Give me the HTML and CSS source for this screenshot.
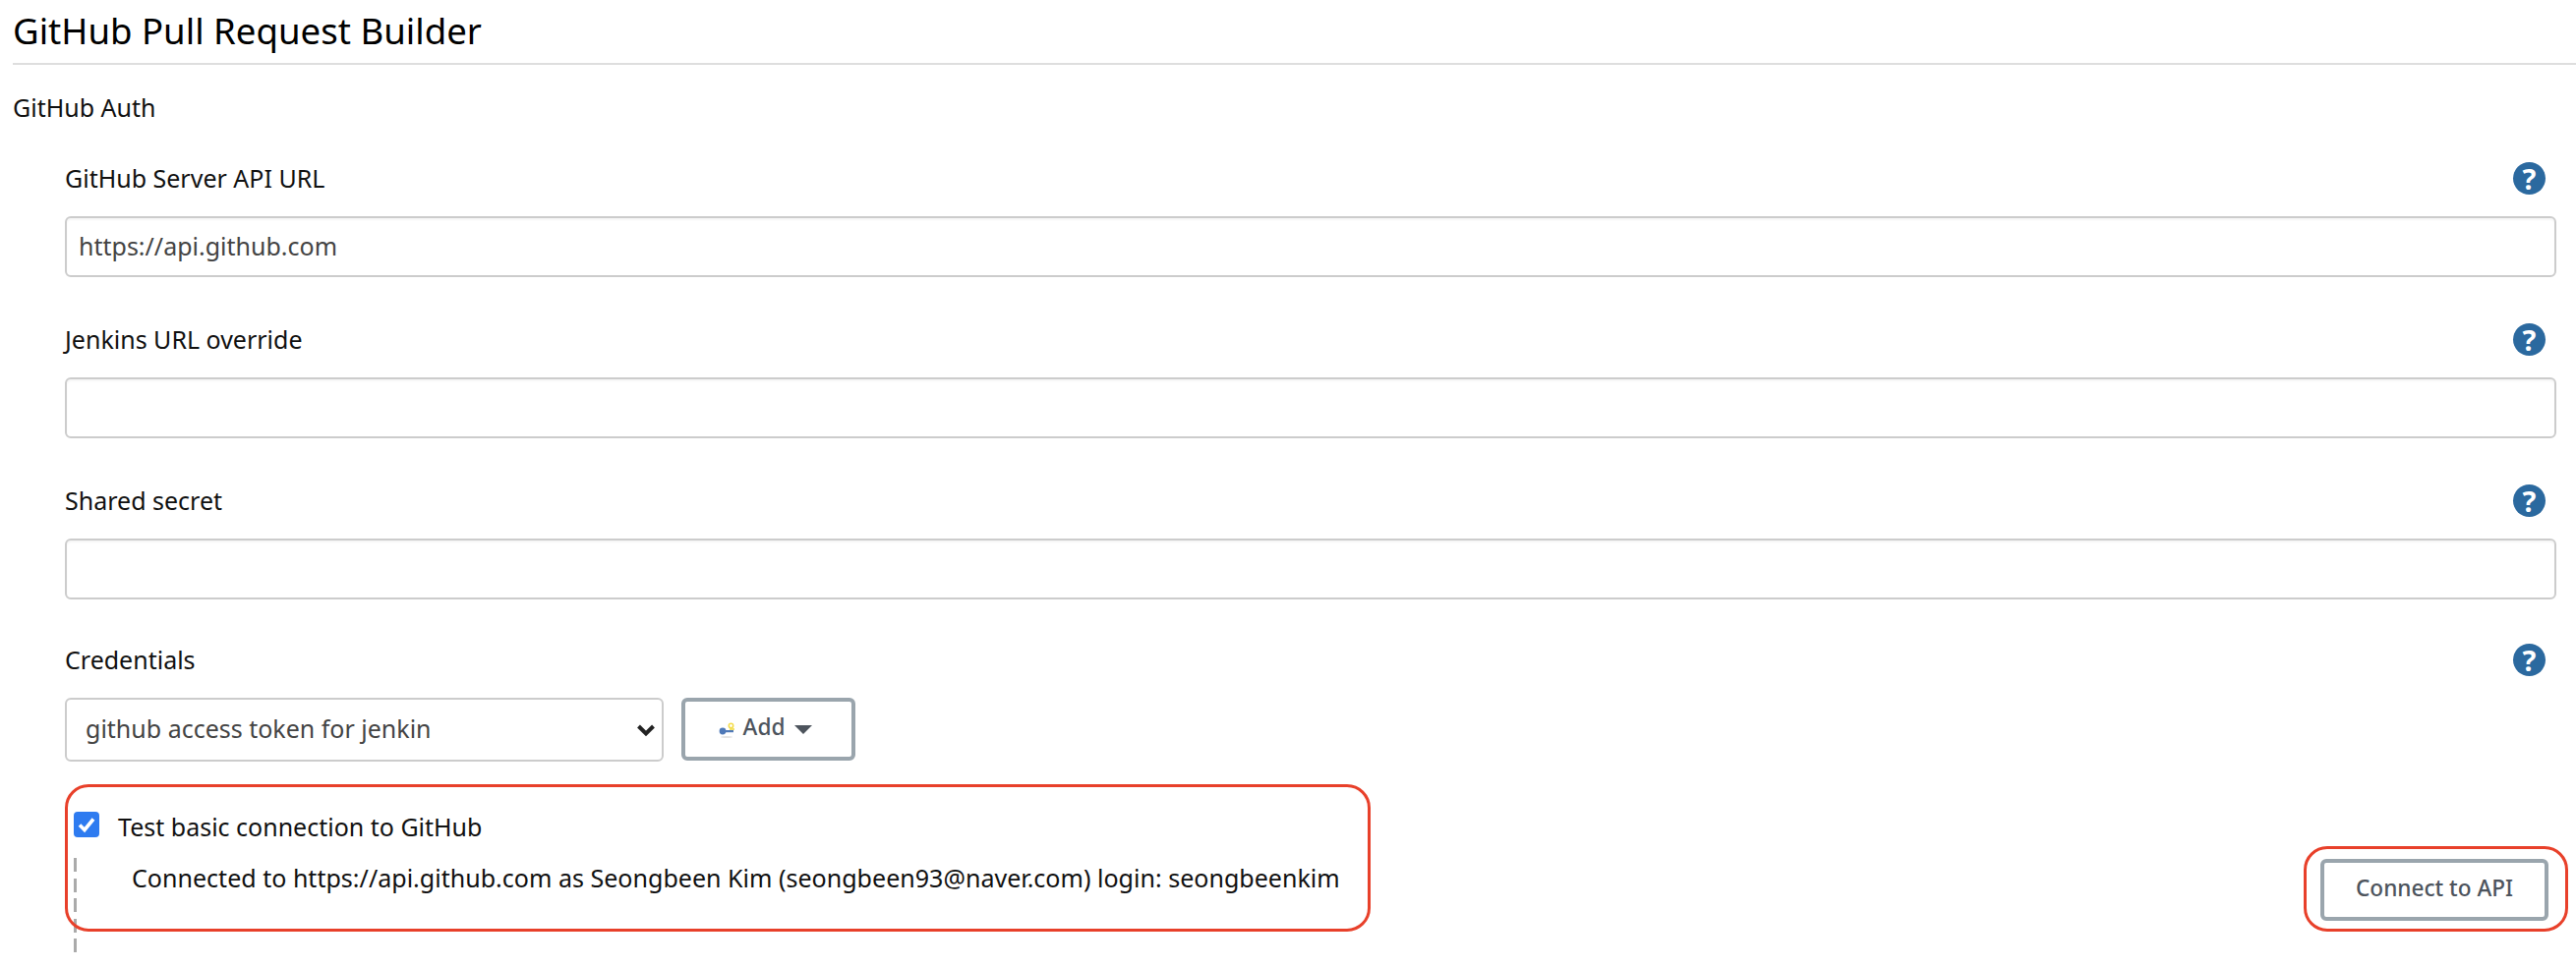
FILE: index.html
```html
<!DOCTYPE html>
<html lang="en">
<head>
<meta charset="utf-8">
<title>GitHub Pull Request Builder</title>
<link rel="stylesheet" href="styles.css">
</head>
<body>
<div class="page">
  <h1 class="title">GitHub Pull Request Builder</h1>
  <div class="section">GitHub Auth</div>
  <div class="fields">
    <div class="field">
      <div class="label-row"><label class="label">GitHub Server API URL</label><span class="help">?</span></div>
      <input class="input" type="text" value="https://api.github.com">
    </div>
    <div class="field">
      <div class="label-row"><label class="label">Jenkins URL override</label><span class="help">?</span></div>
      <input class="input" type="text" value="">
    </div>
    <div class="field">
      <div class="label-row"><label class="label">Shared secret</label><span class="help">?</span></div>
      <input class="input" type="text" value="">
    </div>
    <div class="field">
      <div class="label-row cred-label"><label class="label">Credentials</label><span class="help">?</span></div>
      <div class="cred-row">
        <div class="select">
          <span class="select-text">github access token for jenkin</span>
          <svg class="chev" width="20" height="14" viewBox="0 0 20 14"><path d="M2.5 3 L10 10.5 L17.5 3" fill="none" stroke="#222" stroke-width="4"/></svg>
        </div>
        <button class="btn add" type="button">
          <svg class="key" width="16" height="16" viewBox="0 0 16 16"><ellipse cx="8" cy="15" rx="6" ry="1" fill="#e4e4e4"/><circle cx="4" cy="9" r="3.4" fill="#4f79b8"/><rect x="6" y="8" width="9" height="2.2" fill="#4f79b8"/><rect x="11" y="6" width="5" height="2" fill="#f2e36a"/><circle cx="12.5" cy="3.5" r="2.2" fill="none" stroke="#f4dc4c" stroke-width="1.6"/></svg>
          <span class="add-text">Add</span>
          <svg class="caret" width="18" height="9" viewBox="0 0 18 9"><path d="M0 0 H18 L9 9 Z" fill="#4d545d"/></svg>
        </button>
      </div>
    </div>
    <div class="test">
      <div class="check-row">
        <span class="check"><svg width="26" height="26" viewBox="0 0 26 26"><path d="M6 13.5 L11 18.5 L20 7.5" fill="none" stroke="#fff" stroke-width="3.6"/></svg></span>
        <span class="check-label">Test basic connection to GitHub</span>
      </div>
      <div class="result-row">
        <div class="result">Connected to https://api.github.com as Seongbeen Kim (seongbeen93@naver.com) login: seongbeenkim</div>
        <button class="btn connect" type="button">Connect to API</button>
      </div>
      <span class="dash"></span>
      <span class="mark mark-a"></span>
      <span class="mark mark-b"></span>
    </div>
  </div>
</div>
</body>
</html>
```
FILE: styles.css
```css
html, body { margin: 0; padding: 0; background: #fff; }
body { font-family: "Noto Sans", "Noto Sans CJK KR", sans-serif; color: #111; height: 984px; overflow: hidden; }
.page { padding: 0 0 0 13px; }
.title { margin: 0; height: 64px; line-height: 62px; font-size: 36.6px; font-weight: 400; color: #000; border-bottom: 2px solid #dedede; width: 2607px; }
.section { margin-top: 23px; font-size: 25px; line-height: 40px; height: 40px; }
.fields { margin-left: 53px; width: 2534px; margin-top: 34px; }
.field { height: 164px; }
.label-row { display: flex; justify-content: space-between; align-items: center; height: 36px; padding-right: 11px; margin-bottom: 21px; }
.cred-label { margin-top: -2px; margin-bottom: 21px; }
.label { font-size: 25px; line-height: 36px; }
.help { width: 33px; height: 33px; border-radius: 50%; background: #2b699f; color: #fff; font-size: 29px; font-weight: 700; line-height: 33px; text-align: center; display: block; }
.input { display: block; width: 100%; height: 62px; box-sizing: border-box; border: 2.5px solid #ccc; border-radius: 6px; padding: 0 12px 3px; font: 25px "Noto Sans", sans-serif; color: #444; background: #fff; outline: none; box-shadow: inset 0 2px 2px rgba(0,0,0,.04); }
.cred-row { display: flex; gap: 18px; align-items: flex-start; }
.select { width: 609px; height: 65px; box-sizing: border-box; border: 2.5px solid #ccc; border-radius: 6px; display: flex; align-items: center; justify-content: space-between; padding: 0 6px 0 19px; font-size: 25px; color: #444; }
.select-text { margin-top: -3px; }
.btn { background: #fff; border: 4px solid #9aa5ad; border-radius: 6px; box-sizing: border-box; font-family: "Noto Sans", sans-serif; font-weight: 500; color: #4d545d; font-size: 22.6px; padding: 0; }
.add { width: 177px; height: 64px; display: flex; align-items: center; justify-content: center; gap: 8px; padding-right: 6px; }
.add-text { margin-top: -6px; margin-left: -3px; }
.caret { margin-left: 2px; }
.key { margin-right: 4px; margin-top: 2px; }
.test { position: relative; margin-top: -16px; }
.check-row { display: flex; align-items: center; height: 40px; padding-top: 18px; margin-left: 9px; gap: 19px; }
.check { width: 26px; height: 26px; background: #2e7bf0; border-radius: 4px; display: block; overflow: hidden; }
.check svg { display: block; }
.check-label { font-size: 25px; padding-top: 3px; }
.result-row { display: flex; justify-content: space-between; align-items: flex-start; padding-left: 68px; padding-right: 8px; margin-top: 15px; }
.result { font-size: 25.06px; line-height: 36px; padding-top: 1px; }
.connect { width: 232px; height: 63px; padding-bottom: 5px; }
.dash { position: absolute; left: 8.5px; top: 72px; width: 3.5px; height: 97px; background: repeating-linear-gradient(to bottom, #aaa 0, #aaa 14px, transparent 14px, transparent 20.6px); }
.mark { position: absolute; border: 3px solid #e8402a; box-sizing: border-box; pointer-events: none; }
.mark-a { left: 0; top: -3px; width: 1328px; height: 150px; border-radius: 24px; }
.mark-b { left: 2277px; top: 60px; width: 269px; height: 87px; border-radius: 24px; }
```
